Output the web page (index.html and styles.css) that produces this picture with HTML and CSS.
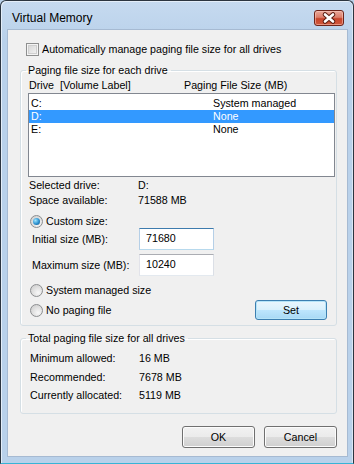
FILE: index.html
```html
<!DOCTYPE html>
<html lang="en">
<head>
  <meta charset="UTF-8" />
  <title>Virtual Memory</title>
  <link rel="stylesheet" href="styles.css">
</head>
<body>
  <div class="window">
    <div class="titlebar">
      <span class="title">Virtual Memory</span>
      <span class="close-btn">
        <svg width="30" height="16" viewBox="0 0 30 16">
          <path d="M11 4.5 L19 11.5 M19 4.5 L11 11.5" stroke="#5b1d12" stroke-width="4.6" stroke-linecap="round" fill="none" />
          <path d="M11 4.5 L19 11.5 M19 4.5 L11 11.5" stroke="#ffffff" stroke-width="2.6" stroke-linecap="round" fill="none" />
        </svg>
      </span>
    </div>

    <div class="client">
      <div class="check-row">
        <span class="checkbox"></span>
        <span>Automatically manage paging file size for all drives</span>
      </div>

      <fieldset class="group group-drives">
        <legend>Paging file size for each drive</legend>
        <div class="list-head">
          <span class="head-drive">Drive</span>
          <span class="head-label">[Volume Label]</span>
          <span>Paging File Size (MB)</span>
        </div>
        <div class="drive-list">
          <div class="drive-row"><span class="row-drive">C:</span><span>System managed</span></div>
          <div class="drive-row selected"><span class="row-drive">D:</span><span>None</span></div>
          <div class="drive-row"><span class="row-drive">E:</span><span>None</span></div>
        </div>

        <div class="info-row first"><span class="info-label">Selected drive:</span><span>D:</span></div>
        <div class="info-row"><span class="info-label">Space available:</span><span>71588 MB</span></div>

        <div class="radio-row custom">
          <span class="radio checked"></span>
          <span>Custom size:</span>
        </div>
        <div class="size-row">
          <span class="size-label">Initial size (MB):</span>
          <span class="textbox focused">71680</span>
        </div>
        <div class="size-row second">
          <span class="size-label">Maximum size (MB):</span>
          <span class="textbox">10240</span>
        </div>

        <div class="radio-row system">
          <span class="radio"></span>
          <span>System managed size</span>
        </div>
        <div class="set-row">
          <div class="radio-row">
            <span class="radio"></span>
            <span>No paging file</span>
          </div>
          <button type="button" class="btn btn-default">Set</button>
        </div>
      </fieldset>

      <fieldset class="group group-total">
        <legend>Total paging file size for all drives</legend>
        <div class="total-row"><span class="total-label">Minimum allowed:</span><span>16 MB</span></div>
        <div class="total-row"><span class="total-label">Recommended:</span><span>7678 MB</span></div>
        <div class="total-row"><span class="total-label">Currently allocated:</span><span>5119 MB</span></div>
      </fieldset>

      <div class="dialog-buttons">
        <button type="button" class="btn">OK</button>
        <button type="button" class="btn">Cancel</button>
      </div>
    </div>
  </div>
</body>
</html>
```

FILE: styles.css
```css
html, body {
  margin: 0;
  padding: 0;
  background: #b9d1ea;
}
body {
  font-family: "Liberation Sans", Arial, sans-serif;
  font-size: 10.7px;
  color: #000;
}
.window {
  width: 354px;
  height: 464px;
  box-sizing: border-box;
  border: 1px solid #2c3540;
  border-bottom-color: #37b4d6;
  border-radius: 6px 6px 0 0;
  background: linear-gradient(#c6daf0, #b9d1ea 40px, #b9d1ea);
  box-shadow: inset 1px 1px 0 #e4eef9, inset -1px 0 0 #dbe7f5;
  display: flex;
  flex-direction: column;
}
.titlebar {
  height: 29px;
  display: flex;
  justify-content: space-between;
  align-items: flex-start;
}
.title {
  font-size: 12px;
  line-height: 15px;
  margin: 10px 0 0 11px;
  color: #000;
}
.close-btn {
  width: 30px;
  height: 16px;
  box-sizing: border-box;
  margin: 9px 9px 0 0;
  border: 1px solid #6e241a;
  border-radius: 3px;
  background: linear-gradient(#e9a99b, #dc7e6b 45%, #c8452c 55%, #d0583c);
  box-shadow: inset 0 0 0 1px rgba(255, 210, 200, 0.5);
  display: flex;
  align-items: center;
  justify-content: center;
}
.close-btn svg {
  display: block;
  margin: -1px;
}
.client {
  flex: 1;
  margin: 0 6px 7px 7px;
  background: #f0f0f0;
  box-shadow: 0 0 0 1px #a6bad2;
  padding: 0 10px 0 12px;
}

.check-row {
  display: flex;
  align-items: center;
  height: 15px;
  line-height: 15px;
  margin-top: 12px;
  padding-left: 6px;
}
.checkbox {
  width: 13px;
  height: 13px;
  box-sizing: border-box;
  border: 1px solid #8e8f8f;
  background: linear-gradient(135deg, #d2d2d2, #f6f6f6);
  box-shadow: inset 0 0 0 1px #f4f4f4, inset 0 0 0 2px #cfcfcf;
  margin-right: 3px;
}

.group {
  margin: 6px 0 0 0;
  padding: 0 1px 5px 7px;
  border: 1px solid #d5dfe5;
  border-radius: 3px;
  box-shadow: inset 1px 1px 0 #fff;
  min-width: 0;
}
.group legend {
  line-height: 15px;
  padding: 0 3px 0 2px;
  margin-left: -2px;
}

.list-head {
  display: flex;
  line-height: 15px;
  padding-left: 1px;
}
.head-drive {
  width: 31px;
}
.head-label {
  width: 124px;
}
.drive-list {
  height: 84px;
  box-sizing: border-box;
  border: 1px solid #828790;
  background: #fff;
  padding-top: 3px;
}
.drive-row {
  display: flex;
  height: 13px;
  line-height: 13px;
  padding-left: 2px;
}
.row-drive {
  width: 182px;
}
.drive-row.selected {
  background: #3399ff;
  color: #fff;
}

.info-row {
  display: flex;
  line-height: 15px;
  padding-left: 1px;
}
.info-row.first {
  margin-top: 1px;
}
.info-label {
  width: 109px;
}

.radio-row {
  display: flex;
  align-items: center;
  height: 13px;
  line-height: 13px;
  padding-left: 2px;
}
.radio-row.custom {
  margin-top: 7px;
}
.radio-row.system {
  margin-top: 8px;
}
.radio {
  width: 13px;
  height: 13px;
  box-sizing: border-box;
  border-radius: 50%;
  border: 1px solid #8c8e90;
  background: radial-gradient(circle at 65% 70%, #f8f8f8, #d6d6d6 70%);
  margin-right: 3px;
  position: relative;
}
.radio.checked::after {
  content: "";
  position: absolute;
  left: 2px;
  top: 2px;
  width: 7px;
  height: 7px;
  border-radius: 50%;
  background: radial-gradient(circle at 35% 35%, #9ee6ff, #2a8fcf 55%, #144e7d);
}

.size-row {
  display: flex;
  align-items: center;
  height: 22px;
  padding-left: 4px;
}
.size-row.second {
  margin-top: 4px;
}
.size-label {
  width: 107px;
}
.textbox {
  width: 75px;
  height: 22px;
  box-sizing: border-box;
  border: 1px solid #abadb3;
  border-left-color: #e2e3ea;
  border-right-color: #dbdfe6;
  border-bottom-color: #e3e9ef;
  background: #fff;
  line-height: 19px;
  padding-left: 6px;
}
.textbox.focused {
  border-color: #3d7bad;
  border-left-color: #b5cfe7;
  border-right-color: #b5cfe7;
  border-bottom-color: #b7d9ed;
}

.set-row {
  display: flex;
  justify-content: space-between;
  align-items: center;
  height: 20px;
  margin-top: 3px;
}

.btn {
  font-family: inherit;
  font-size: inherit;
  color: #000;
  box-sizing: border-box;
  border: 1px solid #707070;
  border-radius: 3px;
  background: linear-gradient(#f2f2f2, #ebebeb 50%, #dddddd 50%, #cfcfcf);
  box-shadow: inset 0 0 0 1px #fcfcfc;
  padding: 0;
  margin: 0;
}
.btn-default {
  width: 72px;
  height: 20px;
  margin-right: 8px;
  border-color: #3c7fb1;
  background: linear-gradient(#eaf6fd, #d9f0fc 50%, #bee6fd 50%, #a7d9f5);
  box-shadow: inset 0 0 0 1px #b6e4f8;
}

.group-total {
  margin-top: 5px;
  padding: 3px 1px 8px 9px;
}
.group-total legend {
  margin-left: -4px;
}
.total-row {
  display: flex;
  line-height: 18.5px;
}
.total-label {
  width: 109px;
}

.dialog-buttons {
  display: flex;
  justify-content: flex-end;
  gap: 9px;
  margin-top: 12px;
}
.dialog-buttons .btn {
  width: 73px;
  height: 22px;
}
```
